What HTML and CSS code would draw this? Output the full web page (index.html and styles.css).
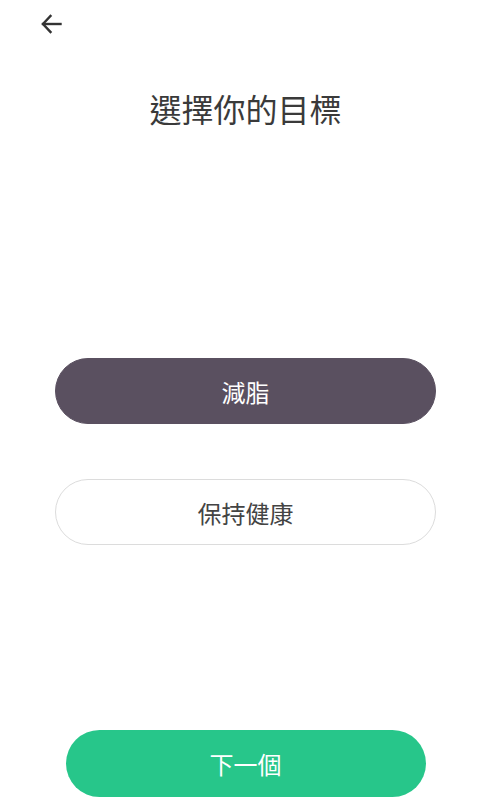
FILE: index.html
```html
<!doctype html>
<html lang="zh-Hant">
<head>
    <meta charset="UTF-8">
    <meta name="viewport" content="width=device-width, initial-scale=1.0">
    <title>選擇你的目標</title>
    <link rel="stylesheet" href="styles.css">
</head>
<body>
<div class="page">
    <div class="topbar">
        <button class="back" aria-label="返回">
            <svg width="22" height="22" viewBox="0 0 22 22" fill="none" stroke="#333" stroke-width="2.4" stroke-linecap="square">
                <path d="M20.5 12H3"/>
                <path d="M10.5 4L3 12l7.5 8"/>
            </svg>
        </button>
    </div>

    <h1 class="title">選擇你的目標</h1>

    <div class="options">
        <button class="option selected">減脂</button>
        <button class="option">保持健康</button>
    </div>

    <button class="next">下一個</button>
</div>
</body>
</html>
```

FILE: styles.css
```css
body {
    margin: 0;
    background-color: #fff;
    font-family: "Noto Sans CJK TC", "Noto Sans", sans-serif;
}

.page {
    height: 807px;
    display: flex;
    flex-direction: column;
    align-items: center;
}

.topbar {
    align-self: stretch;
    height: 46px;
    padding-left: 40px;
    display: flex;
    align-items: center;
}

.back {
    border: none;
    background: none;
    padding: 0;
    width: 22px;
    height: 22px;
    cursor: pointer;
}

.title {
    margin: 42px 0 0;
    font-size: 32px;
    line-height: 40px;
    font-weight: 400;
    color: #3a3a3a;
}

.options {
    margin-top: 230px;
    display: flex;
    flex-direction: column;
    gap: 55px;
}

.option {
    width: 381px;
    height: 66px;
    border-radius: 33px;
    border: 1px solid #dcdcdc;
    background-color: #fff;
    color: #444;
    font-family: inherit;
    font-size: 24px;
    cursor: pointer;
}

.option.selected {
    background-color: #5a5060;
    border-color: #5a5060;
    color: #fff;
}

.next {
    margin-top: auto;
    margin-bottom: 10px;
    width: 360px;
    height: 67px;
    border: none;
    border-radius: 34px;
    background-color: #27c68a;
    color: #fff;
    font-family: inherit;
    font-size: 24px;
    cursor: pointer;
}
```
